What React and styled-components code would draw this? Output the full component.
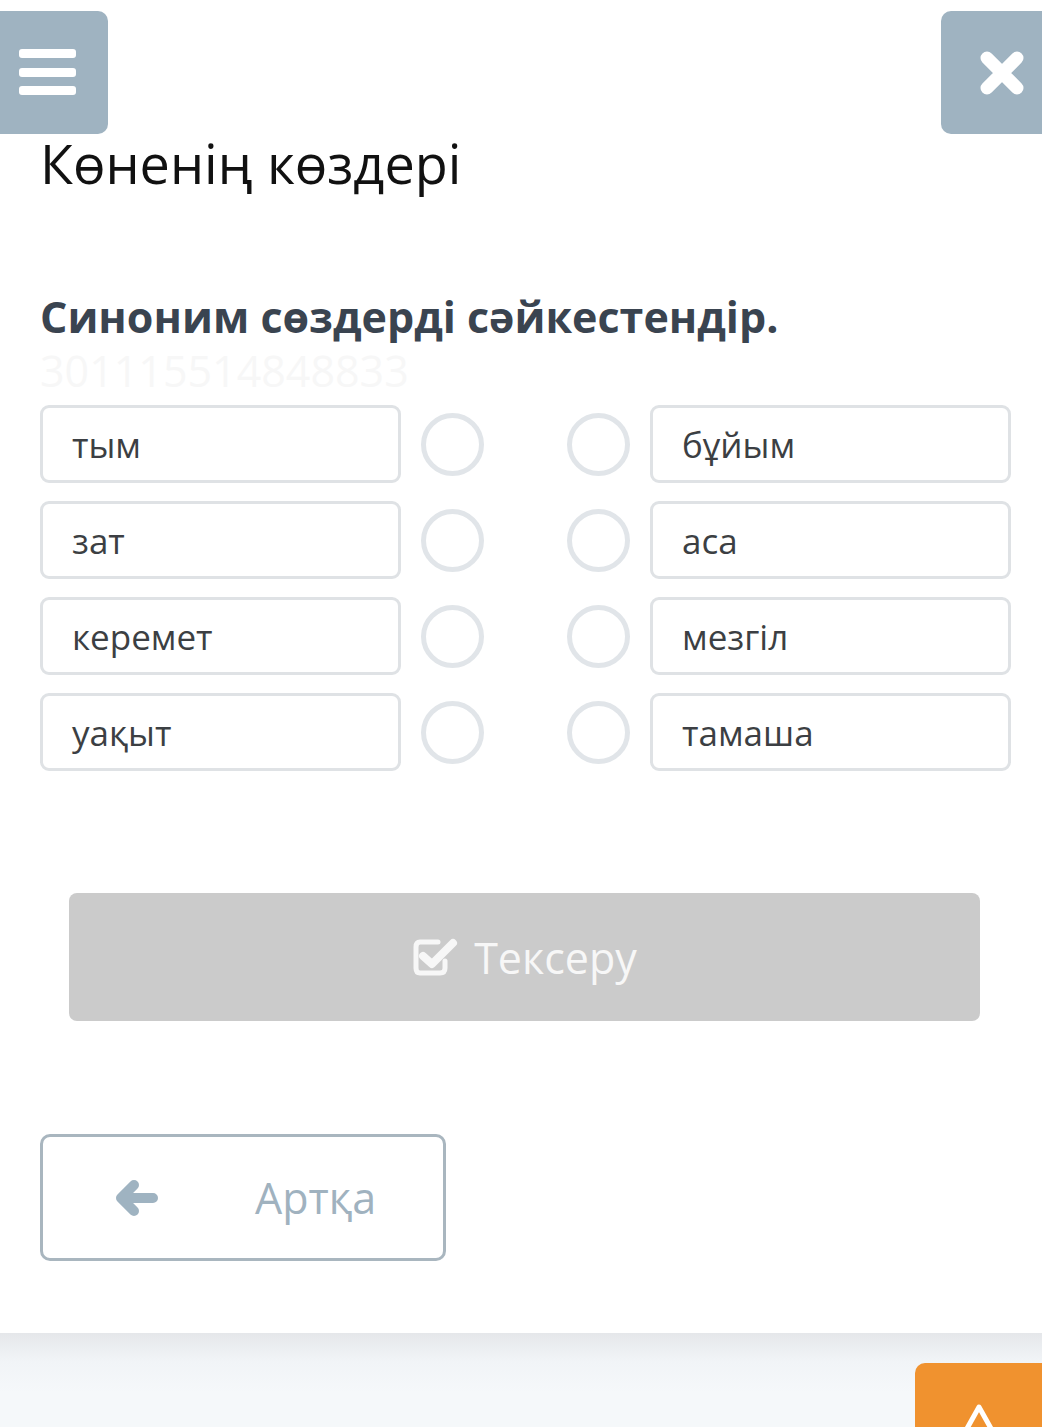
import React from 'react'
import styled, { createGlobalStyle } from 'styled-components'

const GlobalStyle = createGlobalStyle`
  html, body {
    margin: 0;
    padding: 0;
    background: #fff;
  }
  body {
    font-family: 'Open Sans', 'Noto Sans', sans-serif;
  }
`

const Page = styled.div`
  width: 1042px;
  min-height: 1427px;
  overflow: hidden;
  display: flex;
  flex-direction: column;
`

const TopBar = styled.div`
  display: flex;
  justify-content: space-between;
  padding-top: 11px;
`

const IconButton = styled.div`
  width: ${p => p.$width}px;
  height: 123px;
  background: #9fb3c1;
  display: flex;
  align-items: center;
  padding-left: ${p => p.$pad}px;
  box-sizing: border-box;
  border-radius: ${p => (p.$side === 'left' ? '0 10px 10px 0' : '10px 0 0 10px')};
`

const Content = styled.div`
  padding: 0 30px 0 40px;
  display: flex;
  flex-direction: column;
`

const Title = styled.h1`
  margin: 2px 0 0;
  font-size: 54px;
  line-height: 54px;
  font-weight: 400;
  color: #111;
`

const Task = styled.h2`
  margin: 105px 0 0;
  font-size: 43px;
  line-height: 43px;
  font-weight: 700;
  color: #3a4450;
`

const Watermark = styled.div`
  margin-top: 11px;
  font-size: 43px;
  line-height: 43px;
  color: #f7f7f7;
`

const Pairs = styled.div`
  margin-top: 13px;
  display: flex;
  flex-direction: column;
  gap: 18px;
`

const Row = styled.div`
  display: flex;
  align-items: center;
  gap: 20px;
`

const Word = styled.div`
  width: 361px;
  height: 78px;
  box-sizing: border-box;
  border: 3px solid #dfe2e5;
  border-radius: 9px;
  display: flex;
  align-items: center;
  padding-left: 29px;
  font-size: 35px;
  color: #3c3f43;
`

const DotPair = styled.div`
  display: flex;
  gap: 83px;
`

const Dot = styled.div`
  width: 63px;
  height: 63px;
  box-sizing: border-box;
  border: 5px solid #e1e5e9;
  border-radius: 50%;
`

const CheckButton = styled.div`
  margin: 122px 0 0 29px;
  width: 911px;
  height: 128px;
  background: #cbcbcb;
  border-radius: 8px;
  display: flex;
  align-items: center;
  justify-content: center;
  gap: 16px;
  color: #f7f7f7;
  font-size: 43px;
`

const BackButton = styled.div`
  margin-top: 113px;
  width: 406px;
  height: 127px;
  box-sizing: border-box;
  border: 3px solid #a9b6bf;
  border-radius: 10px;
  display: flex;
  align-items: center;
  padding-left: 71px;
  gap: 97px;
  color: #a0b2bf;
  font-size: 43px;
`

const Footer = styled.div`
  margin-top: 72px;
  flex: 1;
  background: linear-gradient(#e5e7ea, #f1f4f7 28px, #f5f8fa 60px);
  display: flex;
  justify-content: flex-end;
  align-items: flex-start;
  padding-top: 30px;
`

const UpButton = styled.div`
  width: 127px;
  height: 80px;
  background: #f0922f;
  border-radius: 10px 0 0 0;
  display: flex;
  justify-content: center;
  padding-top: 38px;
  box-sizing: border-box;
`

const Hamburger = () => (
  <svg width="57" height="47" viewBox="0 0 57 47">
    <rect x="0" y="0" width="57" height="9" rx="3" fill="#fff" />
    <rect x="0" y="19" width="57" height="9" rx="3" fill="#fff" />
    <rect x="0" y="37" width="57" height="9" rx="3" fill="#fff" />
  </svg>
)

const Cross = () => (
  <svg width="46" height="46" viewBox="0 0 46 46">
    <path d="M8 8 L38 38 M38 8 L8 38" stroke="#fff" strokeWidth="13" strokeLinecap="round" />
  </svg>
)

const CheckIcon = () => (
  <svg width="46" height="40" viewBox="0 0 46 40">
    <path
      d="M33 24 V31 Q33 36 28 36 H8 Q4 36 4 31 V10 Q4 5 8 5 H26"
      fill="none"
      stroke="#f7f7f7"
      strokeWidth="5"
      strokeLinecap="round"
    />
    <path
      d="M11 19 L20 27 L41 6"
      fill="none"
      stroke="#f7f7f7"
      strokeWidth="8"
      strokeLinecap="round"
      strokeLinejoin="round"
    />
  </svg>
)

const ArrowLeft = () => (
  <svg width="44" height="38" viewBox="0 0 44 38">
    <path
      d="M39 19 H8 M20 6 L7 19 L20 32"
      fill="none"
      stroke="#9fb3c1"
      strokeWidth="10"
      strokeLinecap="round"
      strokeLinejoin="round"
    />
  </svg>
)

const Caret = () => (
  <svg width="46" height="42" viewBox="0 0 46 42">
    <path d="M4 40 L23 6 L42 40" fill="none" stroke="#fff" strokeWidth="5" strokeLinejoin="round" />
  </svg>
)

const pairs = [
  ['тым', 'бұйым'],
  ['зат', 'аса'],
  ['керемет', 'мезгіл'],
  ['уақыт', 'тамаша']
]

export default function App() {
  return (
    <Page>
      <GlobalStyle />
      <TopBar>
        <IconButton $width={108} $side="left" $pad={19}>
          <Hamburger />
        </IconButton>
        <IconButton $width={101} $side="right" $pad={38}>
          <Cross />
        </IconButton>
      </TopBar>
      <Content>
        <Title>Көненің көздері</Title>
        <Task>Синоним сөздерді сәйкестендір.</Task>
        <Watermark>301115514848833</Watermark>
        <Pairs>
          {pairs.map(([a, b]) => (
            <Row key={a}>
              <Word>{a}</Word>
              <DotPair>
                <Dot />
                <Dot />
              </DotPair>
              <Word>{b}</Word>
            </Row>
          ))}
        </Pairs>
        <CheckButton>
          <CheckIcon />
          Тексеру
        </CheckButton>
        <BackButton>
          <ArrowLeft />
          Артқа
        </BackButton>
      </Content>
      <Footer>
        <UpButton>
          <Caret />
        </UpButton>
      </Footer>
    </Page>
  )
}
